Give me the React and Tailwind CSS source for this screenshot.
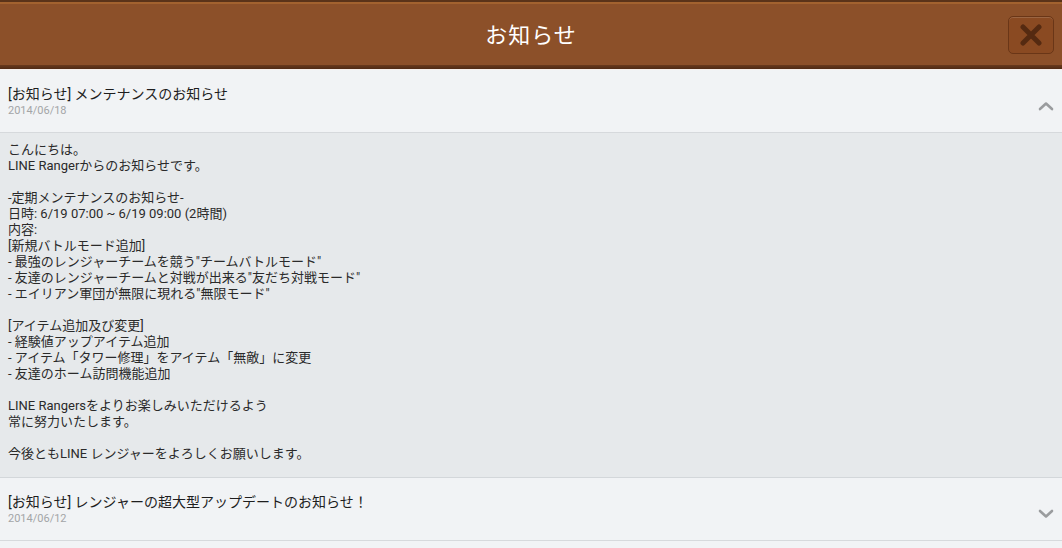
import React from 'react';

const font = { fontFamily: 'Roboto, "Noto Sans CJK JP", sans-serif' };

const body = [
  'こんにちは。',
  'LINE Rangerからのお知らせです。',
  '',
  '-定期メンテナンスのお知らせ-',
  '日時: 6/19 07:00 ~ 6/19 09:00 (2時間)',
  '内容:',
  '[新規バトルモード追加]',
  '- 最強のレンジャーチームを競う"チームバトルモード"',
  '- 友達のレンジャーチームと対戦が出来る"友だち対戦モード"',
  '- エイリアン軍団が無限に現れる"無限モード"',
  '',
  '[アイテム追加及び変更]',
  '- 経験値アップアイテム追加',
  '- アイテム「タワー修理」をアイテム「無敵」に変更',
  '- 友達のホーム訪問機能追加',
  '',
  'LINE Rangersをよりお楽しみいただけるよう',
  '常に努力いたします。',
  '',
  '今後ともLINE レンジャーをよろしくお願いします。',
];

function Chevron({ up }) {
  return (
    <svg width="16" height="10" viewBox="0 0 16 10" className="text-[#9a9c9e]">
      <path
        d={up ? 'M2 8 L8 2.5 L14 8' : 'M2 2 L8 7.5 L14 2'}
        fill="none"
        stroke="currentColor"
        strokeWidth="2.6"
        strokeLinecap="round"
        strokeLinejoin="round"
      />
    </svg>
  );
}

function ItemHeader({ title, date, open }) {
  return (
    <div className="flex items-center justify-between bg-[#f1f3f5] pl-2 pr-[8px] h-[63px] border-b border-[#d6d9dc]">
      <div className="flex flex-col">
        <span className="text-[14px] leading-[18px] text-[#1e1e1e]">{title}</span>
        <span className="text-[11px] leading-[14px] text-[#a3a5a7] mt-[1px]">{date}</span>
      </div>
      <div className="mt-[10px]">
        <Chevron up={open} />
      </div>
    </div>
  );
}

export default function App() {
  return (
    <div className="w-[1062px] h-[548px] overflow-hidden bg-[#f1f3f5] flex flex-col" style={font}>
      <header className="h-[70px] shrink-0 flex flex-col">
        <div className="h-[2px] bg-[#5a3319]" />
        <div className="h-[2px] bg-[#a2622f]" />
        <div className="flex-1 bg-[#8c5029] relative flex items-center justify-center">
          <h1 className="text-[22px] text-white tracking-[1px] mt-[1px]">お知らせ</h1>
          <button className="absolute right-[8px] top-[12px] w-[46px] h-[38px] rounded-[5px] bg-[#8a4a22] border border-[#6a3617] shadow-[inset_0_1px_0_rgba(255,255,255,0.15)] flex items-center justify-center">
            <svg width="24" height="22" viewBox="0 0 24 22">
              <path d="M4 3 L20 19 M20 3 L4 19" stroke="#552a11" strokeWidth="5" strokeLinecap="round" />
            </svg>
          </button>
        </div>
        <div className="h-[4px] bg-gradient-to-b from-[#6a3a1c] to-[#4f2a14]" />
        <div className="h-[1px] bg-[#f7f1ec]" />
      </header>

      <ItemHeader title="[お知らせ] メンテナンスのお知らせ" date="2014/06/18" open />
      <div className="bg-[#e6e9eb] px-2 pt-[9px] pb-[15px] border-b border-[#d3d7da] shrink-0">
        {body.map((line, i) => (
          <div key={i} className="text-[13px] leading-[16px] h-[16px] text-[#2a2a2a] whitespace-pre">
            {line}
          </div>
        ))}
      </div>
      <ItemHeader title="[お知らせ] レンジャーの超大型アップデートのお知らせ！" date="2014/06/12" />
    </div>
  );
}
